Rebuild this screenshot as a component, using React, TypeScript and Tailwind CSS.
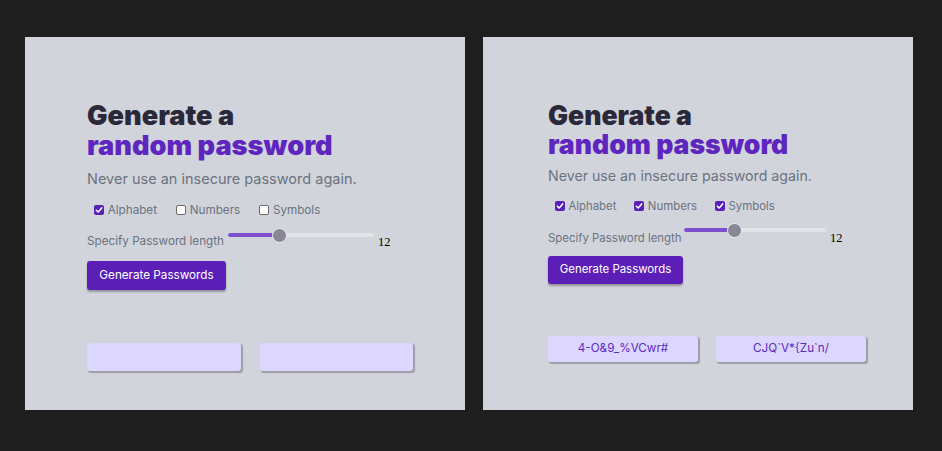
import React from "react";

type Cfg = {
  panel: string;
  h1: string;
  sub: string;
  checks: string;
  checkGap: string;
  label: string;
  sliderRow: string;
  track: string;
  fill: string;
  thumb: string;
  num: string;
  btn: string;
  line: string;
  boxes: string;
  box: string;
  values: string[];
  checked: boolean[];
};

const left: Cfg = {
  panel: "w-[440px] h-[373px] pl-[62px] pt-[64px]",
  h1: "text-[27.2px] leading-[30px]",
  sub: "text-[14.5px] leading-[18px] mt-[8.7px]",
  checks: "mt-[15.7px] pl-[7px] gap-[19px] text-[11.7px] leading-[14px]",
  checkGap: "gap-[3.7px]",
  label: "text-[11.7px] leading-[14px] mt-[6.4px]",
  sliderRow: "mt-[10.6px] h-[22px]",
  track: "w-[146px] ml-[4px]",
  fill: "w-[51px]",
  thumb: "left-[43.5px]",
  num: "mt-[7.5px] ml-[4px]",
  btn: "mt-[11.3px] h-[28.5px] w-[139px] text-[11.7px]",
  line: "mt-[27.2px] ml-[30px] w-[266px]",
  boxes: "mt-[24px] gap-[19px]",
  box: "w-[153.5px] h-[28px] text-[11.7px]",
  values: ["", ""],
  checked: [true, false, false],
};

const right: Cfg = {
  panel: "w-[430px] h-[373px] pl-[65px] pt-[63.5px]",
  h1: "text-[26.6px] leading-[29px]",
  sub: "text-[14.2px] leading-[18px] mt-[8.8px]",
  checks: "mt-[13.9px] pl-[7px] gap-[18px] text-[11.4px] leading-[14px]",
  checkGap: "gap-[3.4px]",
  label: "text-[11.4px] leading-[14px] mt-[8px]",
  sliderRow: "mt-[9.8px] h-[21px]",
  track: "w-[142px] ml-[2.6px]",
  fill: "w-[50px]",
  thumb: "left-[42.5px]",
  num: "mt-[8px] ml-[4px]",
  btn: "mt-[12.2px] h-[27.5px] w-[135px] text-[11.4px]",
  line: "mt-[24.8px] ml-[29px] w-[253px]",
  boxes: "mt-[25.7px] gap-[18px]",
  box: "w-[150px] h-[26px] text-[11.7px]",
  values: ["4-O&9_%VCwr#", "CJQ`V*{Zu`n/"],
  checked: [true, true, true],
};

function Check({ on }: { on: boolean }) {
  if (on) {
    return (
      <span className="w-[10px] h-[10px] rounded-[2px] bg-[#5b21b6] flex items-center justify-center shrink-0">
        <svg width="8" height="8" viewBox="0 0 8 8">
          <path d="M1.3 4.2 L3.2 6 L6.7 1.9" fill="none" stroke="white" strokeWidth="1.5" strokeLinecap="round" strokeLinejoin="round" />
        </svg>
      </span>
    );
  }
  return <span className="w-[10px] h-[10px] rounded-[2px] bg-white border border-[#6b6b6b] shrink-0" />;
}

function Panel({ c }: { c: Cfg }) {
  const names = ["Alphabet", "Numbers", "Symbols"];
  return (
    <div className={`bg-[#d1d5db] shrink-0 flex flex-col ${c.panel}`} style={{ fontFamily: "Inter, 'Noto Sans', sans-serif" }}>
      <h1 className={`font-black ${c.h1}`}>
        <span className="text-[#2b283a]">Generate a</span>
        <br />
        <span className="text-[#5f26bf]">random password</span>
      </h1>
      <p className={`text-[#6b7280] ${c.sub}`}>Never use an insecure password again.</p>
      <div className={`flex items-center text-[#6b7280] ${c.checks}`}>
        {names.map((n, i) => (
          <label key={n} className={`flex items-center ${c.checkGap}`}>
            <Check on={c.checked[i]} />
            <span>{n}</span>
          </label>
        ))}
      </div>
      <div className={`flex items-start ${c.sliderRow}`}>
        <span className={`text-[#6b7280] whitespace-nowrap ${c.label}`}>Specify Password length</span>
        <div className={`relative h-[15px] shrink-0 ${c.track}`}>
          <div className="absolute left-0 right-0 top-[5.5px] h-[4px] rounded-full bg-[#e3e3e8]" />
          <div className={`absolute left-0 top-[5.5px] h-[4px] rounded-full bg-[#7b4fce] ${c.fill}`} />
          <div className={`absolute top-0 w-[15px] h-[15px] rounded-full bg-[#878795] border-[1.5px] border-[#f1f1f4] ${c.thumb}`} />
        </div>
        <span className={`text-black text-[12.5px] leading-[14px] ${c.num}`} style={{ fontFamily: "'Liberation Serif', serif" }}>12</span>
      </div>
      <button className={`bg-[#5b1fb7] text-white rounded-[3px] shadow-[0_2px_2px_rgba(0,0,0,0.3)] flex items-center justify-center ${c.btn}`}>
        Generate Passwords
      </button>
      <div className={`h-[2px] bg-[#d5d6da] ${c.line}`} />
      <div className={`flex ${c.boxes}`}>
        {c.values.map((v, i) => (
          <div key={i} className={`bg-[#ddd6fe] rounded-[3px] shadow-[1.5px_1.5px_1px_#9d9ca8] flex items-center justify-center text-[#5b2bbf] ${c.box}`}>
            {v}
          </div>
        ))}
      </div>
    </div>
  );
}

export default function App() {
  return (
    <div className="w-[942px] h-[451px] bg-[#1e1e1e] flex items-start pt-[37px] pl-[25px] gap-[18px] overflow-hidden">
      <Panel c={left} />
      <Panel c={right} />
    </div>
  );
}
